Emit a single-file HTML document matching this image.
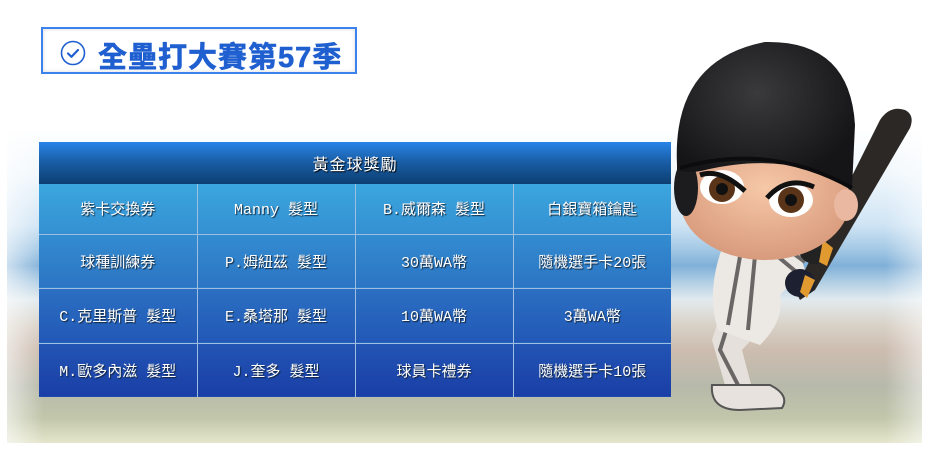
<!DOCTYPE html>
<html><head><meta charset="utf-8"><style>
*{margin:0;padding:0;box-sizing:border-box}
body{width:930px;height:470px;background:#fff;position:relative;overflow:hidden;font-family:"Liberation Sans","Noto Sans CJK TC",sans-serif}
.bg{position:absolute;left:7px;top:132px;width:915px;height:311px;
background:linear-gradient(180deg,#fdfeff 0%,#f0f7fc 14%,#cfe4f4 30%,#a2c7e4 38%,#80b0d8 43%,#afcde4 48%,#e2eaee 54%,#d9d2c8 62%,#cdbdb0 70%,#b7b9aa 82%,#c2c6aa 92%,#e4e6cc 100%);}
.bg:after{content:"";position:absolute;inset:0;background:linear-gradient(90deg,rgba(255,255,255,.6),rgba(255,255,255,0) 4%,rgba(255,255,255,0) 96%,rgba(255,255,255,.5));}
.title{position:absolute;left:41px;top:27px;width:316px;height:47px;border:2px solid #3b82ec;background:#fff;box-shadow:inset 0 0 4px rgba(0,0,0,.15)}
.title span{position:absolute;left:55px;top:5px;font-size:29px;font-weight:bold;color:#1f5fd0;letter-spacing:1px;white-space:nowrap;-webkit-text-stroke:0.6px #1f5fd0}
.chk{position:absolute;left:17px;top:11px}
table{position:absolute;left:39px;top:142px;width:632px;border-collapse:collapse;table-layout:fixed}
th{height:42px;background:linear-gradient(180deg,#2a84e8,#1a5fa8 45%,#0c3f72);color:#fff;font-size:16px;font-weight:normal;letter-spacing:1px;text-shadow:1px 1px 1px #000}
td{border-left:1px solid #9fbfe0;border-top:1px solid #9fbfe0;color:#fff;text-align:center;font-size:15px;font-family:"Liberation Mono","Noto Sans CJK TC",monospace;letter-spacing:0px;text-shadow:1px 1px 1px #123}
td:first-child{border-left:none}
tr.r1 td{height:50px;background:linear-gradient(180deg,#3ba6de,#3490d2);border-top:none}
tr.r2 td{height:54px;background:linear-gradient(180deg,#338cd0,#2c74c4)}
tr.r3 td{height:55px;background:linear-gradient(180deg,#2b6fc2,#2258b6)}
tr.r4 td{height:54px;background:linear-gradient(180deg,#2255b4,#1a3ea6)}
svg.ch{position:absolute;left:0;top:0}
</style></head><body>
<div class="bg"></div>
<div class="title"><svg class="chk" width="26" height="26" viewBox="0 0 26 26"><circle cx="13" cy="13" r="11.5" fill="none" stroke="#1f5fd0" stroke-width="1.6"/><path d="M8 13.5l3.5 3.3L18 10" fill="none" stroke="#1f5fd0" stroke-width="2.2" stroke-linecap="round" stroke-linejoin="round"/></svg><span>全壘打大賽第57季</span></div>
<table>
<tr><th colspan="4">黃金球獎勵</th></tr>
<tr class="r1"><td>紫卡交換券</td><td>Manny 髮型</td><td>B.威爾森 髮型</td><td>白銀寶箱鑰匙</td></tr>
<tr class="r2"><td>球種訓練券</td><td>P.姆紐茲 髮型</td><td>30萬WA幣</td><td>隨機選手卡20張</td></tr>
<tr class="r3"><td>C.克里斯普 髮型</td><td>E.桑塔那 髮型</td><td>10萬WA幣</td><td>3萬WA幣</td></tr>
<tr class="r4"><td>M.歐多內滋 髮型</td><td>J.奎多 髮型</td><td>球員卡禮券</td><td>隨機選手卡10張</td></tr>
</table>
<svg class="ch" width="930" height="470">
<defs>
<radialGradient id="hg" cx="45%" cy="35%" r="60%"><stop offset="0" stop-color="#3a3a3c"/><stop offset="1" stop-color="#151517"/></radialGradient>
<radialGradient id="sk" cx="50%" cy="40%" r="60%"><stop offset="0" stop-color="#f6c8a8"/><stop offset="1" stop-color="#d89a7c"/></radialGradient>
</defs>
<path d="M725 300 L712 340 L725 385 L722 395 L745 402 L752 388 L742 350 L765 325 Z" fill="#e6e0dc"/>
<path d="M730 318 L720 350 L738 385" stroke="#6a6665" stroke-width="4" fill="none"/>
<path d="M712 385 Q710 410 740 410 L782 408 Q790 395 770 385 Z" fill="#e8e2de" stroke="#555" stroke-width="2"/>
<path d="M725 240 Q705 290 718 330 L760 345 Q785 320 780 295 L805 270 L795 240 Z" fill="#ece8e4"/>
<path d="M742 245 L728 325 M756 245 L748 330 M770 250 L800 275 M778 242 L805 262" stroke="#6a6665" stroke-width="4" fill="none"/>
<path d="M905 110 Q915 115 910 128 L815 290 L800 300 L795 290 L880 120 Q890 105 905 110Z" fill="#2c2826"/>
<ellipse cx="815" cy="250" rx="16" ry="14" fill="#222"/>
<ellipse cx="800" cy="283" rx="15" ry="14" fill="#1c2030"/>
<path d="M823 240 l10 8 l-6 18 l-8 -4z" fill="#e09a30"/>
<path d="M805 275 l10 5 l-8 18 l-7 -6z" fill="#e09a30"/>
<ellipse cx="765" cy="200" rx="85" ry="60" fill="url(#sk)"/>
<ellipse cx="846" cy="205" rx="12" ry="16" fill="#eab8a0"/>
<ellipse cx="686" cy="188" rx="12" ry="28" fill="#1c1c1e"/>
<ellipse cx="722" cy="187" rx="22" ry="17" fill="#fff"/>
<ellipse cx="791" cy="200" rx="22" ry="17" fill="#fff"/>
<circle cx="722" cy="189" r="13" fill="#5a3418"/><circle cx="791" cy="200" r="13" fill="#5a3418"/>
<circle cx="722" cy="189" r="6" fill="#111"/><circle cx="791" cy="200" r="6" fill="#111"/>
<path d="M700 175 Q720 168 745 191" stroke="#111" stroke-width="5" fill="none"/>
<path d="M767 198 Q787 175 814 187" stroke="#111" stroke-width="5" fill="none"/>
<path d="M677 165 Q672 60 765 42 Q850 40 855 125 L852 188 Q790 150 705 170 Q690 174 677 170Z" fill="url(#hg)"/>
<path d="M680 168 Q770 142 852 188" stroke="#0c0c0e" stroke-width="4" fill="none"/>
</svg>
</body></html>
